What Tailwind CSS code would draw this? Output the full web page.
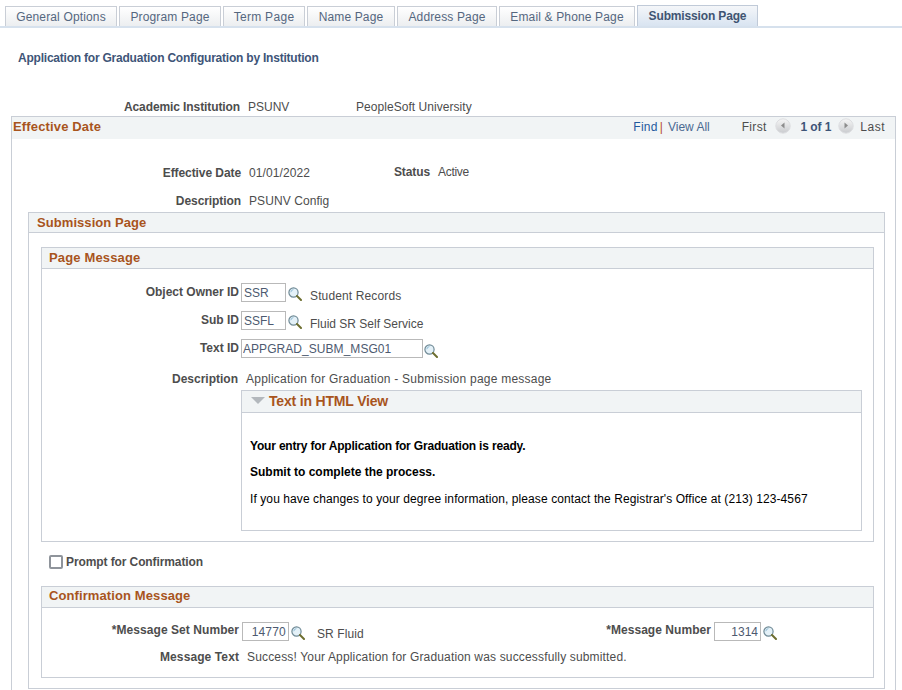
<!DOCTYPE html>
<html lang="en">
<head>
    <meta charset="UTF-8">
    <title>Submission Page</title>
    <script src="https://cdn.jsdelivr.net/npm/@tailwindcss/browser@4"></script>
</head>
<body class="bg-white">
<svg width="0" height="0" class="absolute">
    <defs>
        <symbol id="lookup" viewBox="0 0 14 14">
            <circle cx="5.5" cy="5.5" r="4.6" fill="#e4f1f8" stroke="#6f8a96" stroke-width="1.2"/>
            <path d="M2.8 5.2a3 3 0 0 1 2.6-2.6" fill="none" stroke="#8fbcd6" stroke-width="1"/>
            <path d="M9 9l4 4" stroke="#6d6e2f" stroke-width="2" stroke-linecap="round"/>
        </symbol>
        <linearGradient id="pagerfill" x1="0" y1="0" x2="0" y2="1">
            <stop offset="0" stop-color="#f6f6f6"/>
            <stop offset="1" stop-color="#c9cbce"/>
        </linearGradient>
    </defs>
</svg>
<div class="w-[902px] h-[690px] overflow-hidden font-['Liberation_Sans',Arial,sans-serif] text-[12px] leading-[14px] text-[#4d4d4d]">
    <!-- Tabs -->
    <nav class="h-[28px] pt-[5px] pl-[5px] flex items-end gap-[2px] border-b-2 border-[#d6e1ed] text-[#55677f] tracking-[0.15px]">
        <a class="w-[112px] h-[20px] flex items-center justify-center border border-b-0 border-[#c9ced6] bg-gradient-to-b from-white to-[#eceef0]">General Options</a>
        <a class="w-[102px] h-[20px] flex items-center justify-center border border-b-0 border-[#c9ced6] bg-gradient-to-b from-white to-[#eceef0]">Program Page</a>
        <a class="w-[82px] h-[20px] flex items-center justify-center border border-b-0 border-[#c9ced6] bg-gradient-to-b from-white to-[#eceef0] tracking-[0.3px]">Term Page</a>
        <a class="w-[88px] h-[20px] flex items-center justify-center border border-b-0 border-[#c9ced6] bg-gradient-to-b from-white to-[#eceef0]">Name Page</a>
        <a class="w-[100px] h-[20px] flex items-center justify-center border border-b-0 border-[#c9ced6] bg-gradient-to-b from-white to-[#eceef0]">Address Page</a>
        <a class="w-[136px] h-[20px] flex items-center justify-center border border-b-0 border-[#c9ced6] bg-gradient-to-b from-white to-[#eceef0]">Email &amp; Phone Page</a>
        <a class="w-[121px] h-[21px] flex items-center justify-center border border-b-0 border-[#c0cad8] bg-gradient-to-b from-[#f4f6f9] to-[#d9e4f1] font-bold text-[#3f5472] tracking-[-0.15px]">Submission Page</a>
    </nav>

    <h1 class="mt-[23px] ml-[18px] font-bold text-[#3e5578] tracking-[-0.22px]">Application for Graduation Configuration by Institution</h1>

    <div class="mt-[35px] flex">
        <span class="w-[240px] text-right font-bold tracking-[-0.1px]">Academic Institution</span>
        <span class="ml-[8px] w-[108px]">PSUNV</span>
        <span class="tracking-[0.05px]">PeopleSoft University</span>
    </div>

    <!-- Effective Date -->
    <section class="mt-[2px] ml-[11px] w-[885px] h-[600px] border border-[#c9ced6]">
        <div class="h-[22px] bg-[#f1f4f5] flex items-center pl-[1px] pb-[2px]">
            <h2 class="font-bold text-[13px] tracking-[0.15px] text-[#a8541d]">Effective Date</h2>
            <div class="ml-auto flex items-center pr-[10px]">
                <a class="text-[#1f5a9e] tracking-[0.3px]">Find</a><span class="ml-[2px] mr-[5px] text-[#b5482a]">|</span><a class="text-[#4b6a92]">View All</a>
                <span class="ml-[32px] tracking-[0.3px]">First</span>
                <svg class="ml-[8px] -translate-y-[1px]" width="16" height="16" viewBox="0 0 16 16"><circle cx="8" cy="8" r="7.2" fill="url(#pagerfill)" stroke="#dcdde0"/><path d="M9.5 4.5v6l-3.5-3z" fill="#8c8c8c"/></svg>
                <span class="ml-[10px] font-bold tracking-[-0.1px] text-[#3e5578]">1 of 1</span>
                <svg class="ml-[7px] -translate-y-[1px]" width="16" height="16" viewBox="0 0 16 16"><circle cx="8" cy="8" r="7.2" fill="url(#pagerfill)" stroke="#dcdde0"/><path d="M6.5 4.5v6l3.5-3z" fill="#8c8c8c"/></svg>
                <span class="ml-[6px] tracking-[0.5px]">Last</span>
            </div>
        </div>

        <div class="mt-[27px] flex">
            <span class="w-[229px] text-right font-bold tracking-[-0.08px]">Effective Date</span>
            <span class="ml-[8px] w-[76px] tracking-[0.1px]">01/01/2022</span>
            <span class="w-[105px] text-right font-bold tracking-[-0.1px] -translate-y-[1px]">Status</span>
            <span class="ml-[8px] -translate-y-[1px] tracking-[-0.3px]">Active</span>
        </div>
        <div class="mt-[14px] flex">
            <span class="w-[229px] text-right font-bold tracking-[-0.08px]">Description</span>
            <span class="ml-[8px] tracking-[0.08px]">PSUNV Config</span>
        </div>

        <!-- Submission Page -->
        <section class="mt-[4px] ml-[16px] w-[857px] h-[477px] border border-[#c9ced6]">
            <div class="h-[20px] bg-[#f1f4f5] border-b border-[#c9ced6] pl-[8px] flex items-center">
                <h2 class="font-bold text-[13px] tracking-[0.07px] text-[#a8541d]">Submission Page</h2>
            </div>

            <!-- Page Message -->
            <section class="mt-[14px] ml-[12px] w-[833px] h-[295px] border border-[#c9ced6]">
                <div class="h-[21px] bg-[#f1f4f5] border-b border-[#c9ced6] pl-[7px] flex items-center">
                    <h3 class="font-bold text-[13px] tracking-[0.15px] text-[#a8541d]">Page Message</h3>
                </div>
                <div class="mt-[14px] flex items-start h-[20px]">
                    <span class="w-[197px] mt-[2px] text-right font-bold">Object Owner ID</span>
                    <input value="SSR" class="ml-[2px] w-[45px] h-[19px] border border-[#b9b9b9] px-[2px] text-[#4d5a70]">
                    <svg class="ml-[2px] mt-[4px]" width="14" height="14"><use href="#lookup"/></svg>
                    <span class="ml-[8px] mt-[6px] tracking-[0.13px]">Student Records</span>
                </div>
                <div class="mt-[8px] flex items-start h-[20px]">
                    <span class="w-[197px] mt-[2px] text-right font-bold">Sub ID</span>
                    <input value="SSFL" class="ml-[2px] w-[45px] h-[19px] border border-[#b9b9b9] px-[2px] text-[#4d5a70]">
                    <svg class="ml-[2px] mt-[4px]" width="14" height="14"><use href="#lookup"/></svg>
                    <span class="ml-[8px] mt-[6px]">Fluid SR Self Service</span>
                </div>
                <div class="mt-[8px] flex items-start h-[20px]">
                    <span class="w-[197px] mt-[2px] text-right font-bold">Text ID</span>
                    <input value="APPGRAD_SUBM_MSG01" class="ml-[2px] w-[182px] h-[19px] border border-[#b9b9b9] px-[1px] tracking-[0.05px] text-[#4d5a70]">
                    <svg class="ml-[1px] mt-[5px]" width="14" height="14"><use href="#lookup"/></svg>
                </div>
                <div class="mt-[13px] flex">
                    <span class="w-[196px] text-right font-bold">Description</span>
                    <span class="ml-[8px] tracking-[0.23px]">Application for Graduation - Submission page message</span>
                </div>

                <!-- Text in HTML View -->
                <section class="mt-[4px] ml-[199px] w-[621px] h-[141px] border border-[#c9ced6]">
                    <div class="h-[22px] bg-[#f1f4f5] border-b border-[#c9ced6] pb-[2px] flex items-center">
                        <svg class="ml-[9px]" width="14" height="8" viewBox="0 0 14 8"><path d="M0 0h14l-7 7z" fill="#b3b8bd"/></svg>
                        <h4 class="ml-[4px] font-bold text-[14px] tracking-[-0.18px] text-[#a8541d]">Text in HTML View</h4>
                    </div>
                    <div class="pl-[8px] pt-[26px] text-black">
                        <p class="font-bold tracking-[-0.18px]">Your entry for Application for Graduation is ready.</p>
                        <p class="mt-[12px] font-bold">Submit to complete the process.</p>
                        <p class="mt-[13px] tracking-[0.09px]">If you have changes to your degree information, please contact the Registrar's Office at (213) 123-4567</p>
                    </div>
                </section>
            </section>

            <label class="mt-[13px] ml-[20px] flex items-center">
                <span class="w-[14px] h-[14px] border-2 border-[#8f949b] rounded-[2px] bg-white"></span>
                <span class="ml-[3px] font-bold tracking-[-0.1px]">Prompt for Confirmation</span>
            </label>

            <!-- Confirmation Message -->
            <section class="mt-[17px] ml-[12px] w-[833px] h-[92px] border border-[#c9ced6]">
                <div class="h-[21px] bg-[#f1f4f5] border-b border-[#c9ced6] pl-[7px] pb-[2px] flex items-center">
                    <h3 class="font-bold text-[13px] tracking-[0.1px] text-[#a8541d]">Confirmation Message</h3>
                </div>
                <div class="mt-[14px] flex items-start h-[20px]">
                    <span class="w-[197px] mt-[1px] text-right font-bold tracking-[0.06px]">*Message Set Number</span>
                    <input value="14770" class="ml-[3px] w-[47px] h-[19px] border border-[#b9b9b9] px-[2px] text-right tracking-[0.2px] text-[#4d5a70]">
                    <svg class="ml-[2px] mt-[4px]" width="14" height="14"><use href="#lookup"/></svg>
                    <span class="ml-[12px] mt-[5px] w-[289px] tracking-[0.1px]">SR Fluid</span>
                    <span class="w-[105px] mt-[1px] text-right font-bold tracking-[0.05px]">*Message Number</span>
                    <input value="1314" class="ml-[3px] w-[47px] h-[19px] border border-[#b9b9b9] px-[2px] text-right text-[#4d5a70]">
                    <svg class="ml-[2px] mt-[4px]" width="14" height="14"><use href="#lookup"/></svg>
                </div>
                <div class="mt-[8px] flex">
                    <span class="w-[197px] text-right font-bold tracking-[0.1px]">Message Text</span>
                    <span class="ml-[8px] tracking-[0.16px]">Success! Your Application for Graduation was successfully submitted.</span>
                </div>
            </section>
        </section>
    </section>
</div>
</body>
</html>
